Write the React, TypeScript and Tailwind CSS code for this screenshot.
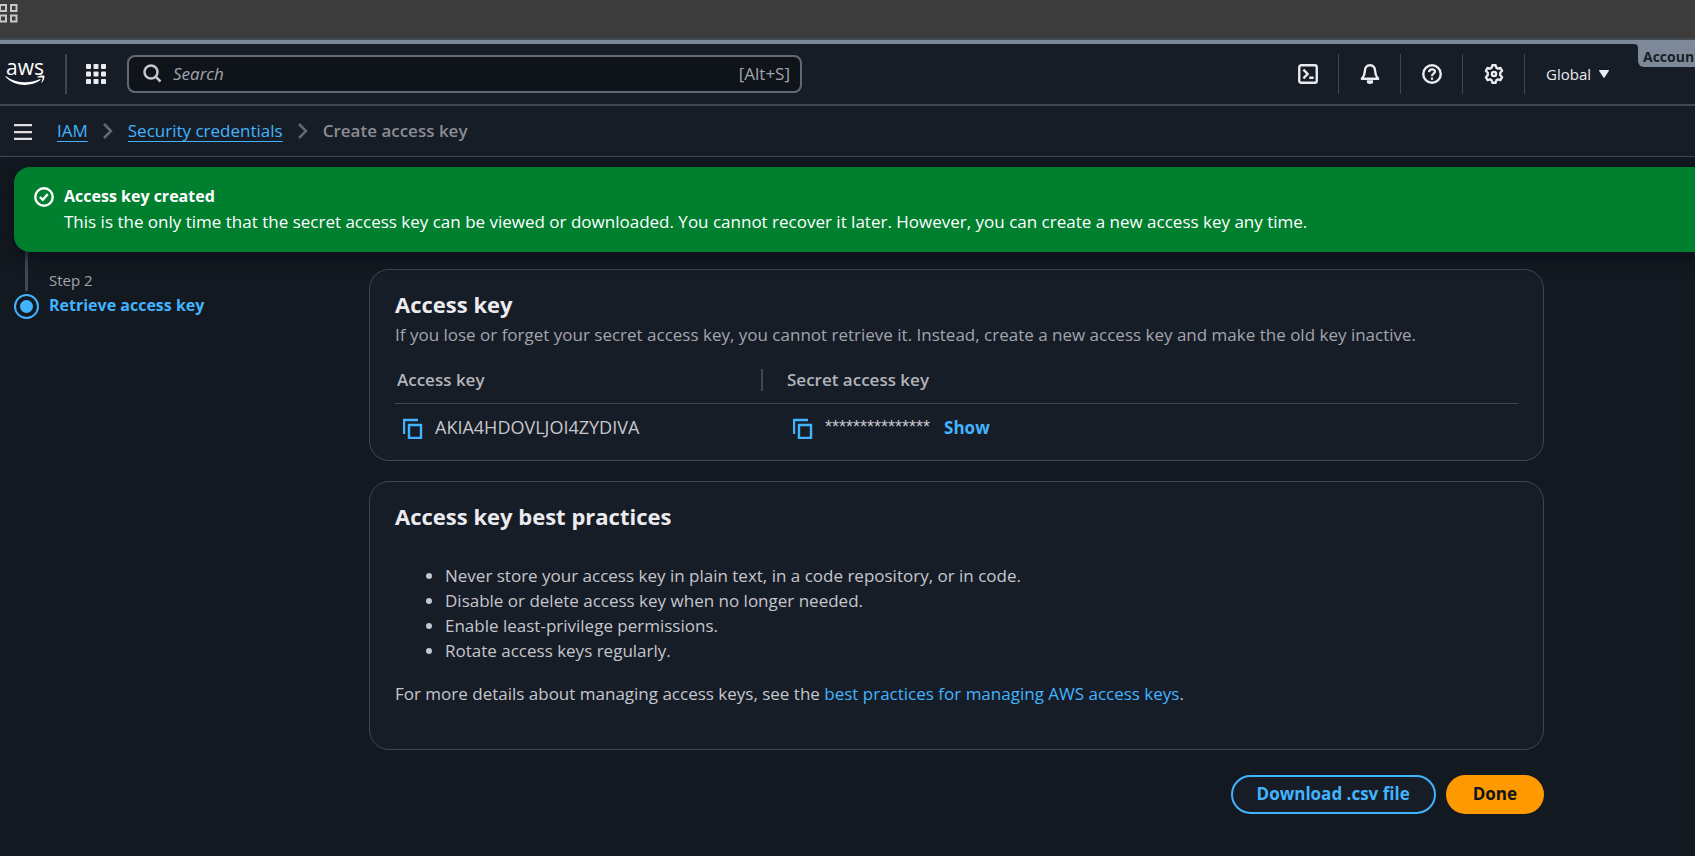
import React from 'react';

const practices = [
  'Never store your access key in plain text, in a code repository, or in code.',
  'Disable or delete access key when no longer needed.',
  'Enable least-privilege permissions.',
  'Rotate access keys regularly.',
];

function Svg({ children, className = 'size-5', box = '0 0 16 16' }: { children: React.ReactNode; className?: string; box?: string }) {
  return (
    <svg viewBox={box} className={className} fill="none" stroke="currentColor" strokeWidth="2" aria-hidden="true">
      {children}
    </svg>
  );
}

function AwsLogo() {
  return (
    <a href="#home" aria-label="AWS home" className="flex w-10 flex-col items-center pb-1 text-white">
      <span className="text-[21px] leading-4 font-medium">aws</span>
      <svg viewBox="0 0 40 11" className="h-[11px] w-10" fill="currentColor" aria-hidden="true">
        <path d="M1 1.2C6.500 5.200 13 7.200 20 7.200c5 0 10.300-1.100 14.600-3 .8-.3 1.300.5.600 1C31.200 8 25.400 9.900 19.800 9.900 12.300 9.900 5.600 7.200.6 2 .2 1.600.5.900 1 1.200z" />
        <path d="M32.500 1.600C34.800.3 38.700.1 39.300.8c.6.800-.2 5-2.300 6.800-.4.3-.8.1-.6-.3.600-1.300 1.500-3.900 1.100-4.500-.4-.6-3.200-.4-4.600-.2-.5 0-.8-.7-.4-1z" />
      </svg>
    </a>
  );
}

function CopyButton({ label }: { label: string }) {
  return (
    <button type="button" aria-label={label} className="p-0 text-[#42b4ff]">
      <Svg className="h-[22px] w-[22px]" box="0 0 22 22">
        <path d="M1 17V3h14" strokeWidth="2.400" />
        <path d="M6 8h12v13H6z" strokeWidth="2.400" />
      </Svg>
    </button>
  );
}

function NavButton({ label, children }: { label: string; children: React.ReactNode }) {
  return (
    <button type="button" aria-label={label} className="flex h-10 w-[62px] items-center justify-center border-r border-[#424650] pl-[2px]">
      {children}
    </button>
  );
}

export default function App() {
  return (
    <div className="min-h-screen overflow-hidden bg-[#131920] font-['Open_Sans','Noto_Sans',sans-serif] text-[17px] leading-[25px] text-[#c6c6cd]">
      <div className="flex h-10 items-start border-b-2 border-[#434b50] bg-[#3c3c3c]">
        <Svg className="mt-1 h-5 w-[18px] text-[#c7c7c7]" box="0 0 18 20">
          <path d="M0 1h6v6H0zM11 1h5.500v6H11zM0 11.500h6v6H0zM11 11.500h5.500v6H11z" />
        </Svg>
      </div>

      <header className="relative flex h-[66px] items-center border-t-4 border-b-2 border-t-[#7d8998] border-b-[#424650] bg-[#161d26] pl-[5px] text-[#ebebf0]">
        <AwsLogo />
        <div className="ml-5 h-10 w-0.5 bg-[#424650]" />
        <button type="button" aria-label="Services" className="ml-[19px]">
          <svg viewBox="0 0 20 20" className="size-5" fill="currentColor" aria-hidden="true">
            {[0, 7.5, 15].map((y) => [0, 7.5, 15].map((x) => <rect key={`${x}-${y}`} x={x} y={y} width="5" height="5" rx="0.8" />))}
          </svg>
        </button>
        <label className="ml-[21px] flex h-[38px] w-[675px] items-center rounded-lg border-2 border-[#656871] bg-[#0f141a] pr-[10px] pb-px pl-[14px]">
          <Svg className="size-[19px] text-[#c6c6cd]" box="0 0 19 19">
            <circle cx="8" cy="8" r="6.500" strokeWidth="2.500" />
            <path d="m12.500 12.500 5 5" strokeWidth="2.500" />
          </Svg>
          <input type="search" aria-label="Search" placeholder="Search" className="ml-[11px] min-w-0 flex-1 bg-transparent outline-none placeholder:text-[#a4a4ad] placeholder:italic" />
          <span className="text-[#a4a4ad]">[Alt+S]</span>
        </label>
        <nav className="ml-auto flex items-center pr-[86px]">
          <NavButton label="CloudShell">
            <Svg><rect x="1" y="1" width="14" height="14" rx="1.500" strokeWidth="1.900" /><path d="m4.300 4.500 3.400 3.500-3.400 3.500M9 11h3.500" strokeWidth="1.900" /></Svg>
          </NavButton>
          <NavButton label="Notifications">
            <Svg><path d="M8 1C5.200 1 3.900 3.200 3.900 5.500c0 3.500-.9 4.500-2.400 6.300h13c-1.500-1.800-2.400-2.800-2.400-6.300C12.100 3.200 10.800 1 8 1z" strokeWidth="1.900" strokeLinejoin="round" /><path d="M5.500 13h5v1.200a2.500 1.800 0 0 1-5 0z" fill="currentColor" stroke="none" /></Svg>
          </NavButton>
          <NavButton label="Help">
            <Svg><circle cx="8" cy="8" r="7" strokeWidth="1.900" /><path d="M5.600 6.500C5.700 5 6.700 4.300 8 4.300c1.400 0 2.400.8 2.400 1.900C10.400 7.600 8 7.600 8 9.700M8 10.700v1.800" strokeWidth="1.800" /></Svg>
          </NavButton>
          <NavButton label="Settings">
            <Svg><path d="M6.700 1h2.600l.6 2 1.200.7 2-.6 1.400 2.300L13 7v2l1.500 1.600-1.400 2.300-2-.6-1.200.7-.6 2H6.700l-.6-2-1.200-.7-2 .6-1.400-2.300L3 9V7L1.500 5.400l1.400-2.300 2 .6L6.100 3z" strokeWidth="1.900" strokeLinejoin="round" /><circle cx="8" cy="8" r="1.700" strokeWidth="1.900" /></Svg>
          </NavButton>
          <button type="button" className="ml-[21px] flex items-center gap-2 text-[15px]">
            Global
            <svg viewBox="0 0 10 8" className="h-2 w-[10px]" fill="currentColor" aria-hidden="true"><path d="M.5 0h9q.7.300.3 1L5.600 7.500q-.6.700-1.200 0L.2 1Q-.2.300.5 0z" /></svg>
          </button>
        </nav>
        <div className="absolute -top-1 right-0 h-[27px] w-[57px] rounded-bl-md bg-[#7d8998] pt-1 pl-[5px] text-[14px] font-bold whitespace-nowrap text-[#161d26]">
          <span className="absolute top-1 -left-1 size-1 bg-[#7d8998]"><span className="block size-1 rounded-tr bg-[#161d26]" /></span>
          Account
        </div>
      </header>

      <div className="flex h-[51px] items-center border-b border-[#424650] bg-[#161d26] pl-[14px]">
        <button type="button" aria-label="Open navigation" className="pt-px text-[#dedee3]">
          <svg viewBox="0 0 18 16" className="h-4 w-[18px]" fill="currentColor" aria-hidden="true"><path d="M0 0h18v2.200H0zM0 7h18v2.200H0zM0 13.800h18V16H0z" /></svg>
        </button>
        <nav aria-label="Breadcrumb" className="ml-[25px] flex items-center gap-[14px] pb-px">
          <a href="#iam" className="text-[#42b4ff] underline underline-offset-4">IAM</a>
          <Svg className="h-4 w-3 text-[#656871]" box="0 0 12 16"><path d="m2 1 7 7-7 7" strokeWidth="2.500" /></Svg>
          <a href="#credentials" className="text-[#42b4ff] underline underline-offset-4">Security credentials</a>
          <Svg className="h-4 w-3 text-[#656871]" box="0 0 12 16"><path d="m2 1 7 7-7 7" strokeWidth="2.500" /></Svg>
          <span className="font-semibold text-[#8c8c94]">Create access key</span>
        </nav>
      </div>

      <div role="status" className="relative mt-[10px] -mr-4 ml-[14px] flex h-[85px] gap-[10px] rounded-2xl bg-[#00802f] pt-[17px] pl-5 text-white shadow-[0_4px_16px_#0a0f1a]">
        <Svg className="mt-[3px] size-5"><circle cx="8" cy="8" r="7" strokeWidth="1.900" /><path d="m4.700 8 2.300 2.300 4-4.600" strokeWidth="1.900" /></Svg>
        <div>
          <h2 className="text-[16px] font-bold">Access key created</h2>
          <p>This is the only time that the secret access key can be viewed or downloaded. You cannot recover it later. However, you can create a new access key any time.</p>
        </div>
      </div>

      <div className="flex">
        <aside className="flex w-[369px] shrink-0 gap-[10px] pl-[14px]">
          <div className="flex flex-col items-center">
            <div className="h-[39px] w-[3px] bg-[#424650]" />
            <svg viewBox="0 0 25 25" className="mt-[3px] size-[25px]" aria-hidden="true">
              <circle cx="12.500" cy="12.500" r="11.500" fill="none" stroke="#42b4ff" strokeWidth="2" />
              <circle cx="12.500" cy="12.500" r="6.500" fill="#42b4ff" />
            </svg>
          </div>
          <div className="pt-4">
            <p className="text-[15px] text-[#a4a4ad]">Step 2</p>
            <p className="text-[16px] leading-6 font-bold text-[#42b4ff]">Retrieve access key</p>
          </div>
        </aside>

        <main className="mr-[151px] min-w-0 flex-1 pt-[17px]">
          <section className="h-[192px] rounded-[20px] border border-[#424650] bg-[#161d26] px-[25px] pt-[19px]">
            <h1 className="text-[22px] leading-[30px] font-bold text-[#ebebf0]">Access key</h1>
            <p className="pt-[3px] text-[#a4a4ad]">If you lose or forget your secret access key, you cannot retrieve it. Instead, create a new access key and make the old key inactive.</p>
            <table className="mt-[14px] w-full table-fixed border-collapse text-left">
              <thead>
                <tr className="h-[42px] border-b border-[#424650] text-[#b4b4bb]">
                  <th className="w-[368px] p-0 pb-1 font-semibold">
                    <div className="ml-[2px] flex h-[22px] items-center border-r-2 border-[#424650]">Access key</div>
                  </th>
                  <th className="p-0 pb-1 pl-6 font-semibold">Secret access key</th>
                </tr>
              </thead>
              <tbody>
                <tr className="h-[49px]">
                  <td className="p-0 pl-2"><div className="flex items-center gap-[10px] text-[18px]"><CopyButton label="Copy access key" />AKIA4HDOVLJOI4ZYDIVA</div></td>
                  <td className="p-0 pl-[30px]">
                    <div className="flex items-center">
                      <CopyButton label="Copy secret access key" />
                      <span className="ml-[10px] font-['Liberation_Sans',sans-serif] text-[18px]">***************</span>
                      <button type="button" className="ml-[14px] font-bold text-[#42b4ff]">Show</button>
                    </div>
                  </td>
                </tr>
              </tbody>
            </table>
          </section>

          <section className="mt-5 h-[269px] rounded-[20px] border border-[#424650] bg-[#161d26] px-[25px] pt-[19px]">
            <h2 className="text-[22px] leading-[30px] font-bold text-[#ebebf0]">Access key best practices</h2>
            <ul className="mt-8 list-disc pl-[50px]">
              {practices.map((item) => <li key={item}>{item}</li>)}
            </ul>
            <p className="mt-[18px]">For more details about managing access keys, see the <a href="#best-practices" className="text-[#42b4ff]">best practices for managing AWS access keys</a>.</p>
          </section>

          <div className="mt-[25px] flex justify-end gap-[10px] font-bold">
            <button type="button" className="h-[39px] rounded-full border-2 border-[#42b4ff] bg-[#161d26] px-6 pb-[2px] text-[#42b4ff]">Download .csv file</button>
            <button type="button" className="h-[39px] rounded-full bg-[#ff9900] px-[27px] pb-[2px] text-[#0f141a]">Done</button>
          </div>
        </main>
      </div>
    </div>
  );
}
